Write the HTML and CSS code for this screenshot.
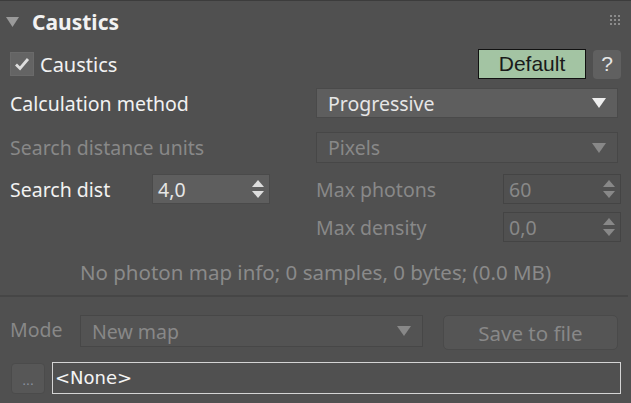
FILE: index.html
```html
<!DOCTYPE html>
<html lang="en">
<head>
    <meta charset="UTF-8">
    <title>Caustics</title>
    <link rel="stylesheet" href="styles.css">
</head>
<body>
    <div class="panel">
        <div class="header">
            <svg class="caret" width="14" height="11" viewBox="0 0 14 11"><polygon points="0,0 13,0 6.5,10" fill="#9a9a9a"/></svg>
            <span class="title">Caustics</span>
            <svg class="grip" width="11" height="11" viewBox="0 0 11 11" fill="#8c8c8c">
                <rect x="0" y="0" width="2" height="2"/><rect x="4" y="0" width="2" height="2"/><rect x="8" y="0" width="2" height="2"/>
                <rect x="0" y="4" width="2" height="2"/><rect x="4" y="4" width="2" height="2"/><rect x="8" y="4" width="2" height="2"/>
                <rect x="0" y="8" width="2" height="2"/><rect x="4" y="8" width="2" height="2"/><rect x="8" y="8" width="2" height="2"/>
            </svg>
        </div>

        <div class="row row-check">
            <label class="check">
                <span class="box"><svg width="16" height="14" viewBox="0 0 16 14"><path d="M2 7.5 L6 11.5 L14 2" fill="none" stroke="#dedede" stroke-width="2.8"/></svg></span>
                Caustics
            </label>
            <button class="btn-default">Default</button>
            <button class="btn-help">?</button>
        </div>

        <div class="row row-calc">
            <span class="label">Calculation method</span>
            <div class="select">
                <span>Progressive</span>
                <svg class="arrow" width="14" height="10" viewBox="0 0 14 10"><polygon points="0,0 14,0 7,10" fill="#eeeeee"/></svg>
            </div>
        </div>

        <div class="row row-units">
            <span class="label dim">Search distance units</span>
            <div class="select off">
                <span>Pixels</span>
                <svg class="arrow" width="14" height="10" viewBox="0 0 14 10"><polygon points="0,0 14,0 7,10" fill="#888888"/></svg>
            </div>
        </div>

        <div class="row row-search">
            <span class="label label-dist">Search dist</span>
            <div class="spin">
                <span>4,0</span>
                <svg class="updown" width="12" height="18" viewBox="0 0 12 18" fill="#dddddd"><polygon points="6,0 12,7 0,7"/><polygon points="0,11 12,11 6,18"/></svg>
            </div>
            <span class="label dim label-max">Max photons</span>
            <div class="spin off">
                <span>60</span>
                <svg class="updown" width="12" height="18" viewBox="0 0 12 18" fill="#888888"><polygon points="6,0 12,7 0,7"/><polygon points="0,11 12,11 6,18"/></svg>
            </div>
        </div>

        <div class="row row-density">
            <span class="label dim label-max">Max density</span>
            <div class="spin off">
                <span>0,0</span>
                <svg class="updown" width="12" height="18" viewBox="0 0 12 18" fill="#888888"><polygon points="6,0 12,7 0,7"/><polygon points="0,11 12,11 6,18"/></svg>
            </div>
        </div>

        <div class="info">No photon map info; 0 samples, 0 bytes; (0.0 MB)</div>

        <div class="separator"></div>

        <div class="row row-mode">
            <span class="label dim label-mode">Mode</span>
            <div class="select off mode-select">
                <span>New map</span>
                <svg class="arrow" width="14" height="10" viewBox="0 0 14 10"><polygon points="0,0 14,0 7,10" fill="#888888"/></svg>
            </div>
            <button class="btn-save">Save to file</button>
        </div>

        <div class="row row-file">
            <button class="btn-dots">...</button>
            <div class="file-field">&lt;None&gt;</div>
        </div>
    </div>
</body>
</html>
```

FILE: styles.css
```css
body {
    margin: 0;
    background: #505050;
    font-family: 'Noto Sans', 'Open Sans', sans-serif;
    color: #f2f2f2;
}
.panel {
    width: 631px;
    height: 403px;
    box-sizing: border-box;
    border-top: 1px solid #3c3c3c;
    background: #505050;
    overflow: hidden;
}
.header {
    display: flex;
    align-items: center;
    height: 41px;
    padding: 0 10px 0 6px;
}
.caret {
    margin-right: 12px;
    margin-top: 1px;
}
.title {
    font-weight: bold;
    font-size: 21px;
    flex: 1;
}
.grip {
    margin-top: -2px;
}
.row {
    display: flex;
    align-items: center;
    padding: 0 10px;
}
.label {
    font-size: 19.5px;
    flex: 1;
}
.dim {
    color: #888;
}

/* checkbox row */
.row-check {
    margin-top: 7px;
    height: 30px;
}
.check {
    display: flex;
    align-items: center;
    font-size: 20px;
    flex: 1;
}
.box {
    width: 22px;
    height: 22px;
    background: #646464;
    border: 1px solid #6a6a6a;
    display: flex;
    align-items: center;
    justify-content: center;
    margin-right: 6px;
}
.btn-default {
    width: 108px;
    height: 30px;
    background: #a3c4a3;
    border: 1px solid #111;
    font-family: 'Liberation Sans', Arial, sans-serif;
    font-size: 21px;
    color: #1a1a1a;
    padding: 0;
    margin-right: 7px;
}
.btn-help {
    width: 28px;
    height: 29px;
    background: #606060;
    border: none;
    border-radius: 4px;
    color: #e6e6e6;
    font-family: 'Liberation Sans', Arial, sans-serif;
    font-size: 21px;
    padding: 0;
}

/* dropdowns */
.select {
    width: 302px;
    height: 30px;
    box-sizing: border-box;
    margin-right: 3px;
    background: #5e5e5e;
    border: 1px solid #4a4a4a;
    display: flex;
    align-items: center;
    padding: 0 11px 0 11px;
    font-size: 19.5px;
    color: #e6e6e6;
}
.select span {
    flex: 1;
}
.select.off {
    background: #535353;
    border-color: #474747;
    color: #888;
}
.row-calc {
    margin-top: 9px;
    height: 30px;
}
.row-units {
    margin-top: 14px;
    height: 31px;
}
.row-units .select {
    height: 31px;
}

/* spinners */
.spin {
    width: 118px;
    height: 30px;
    box-sizing: border-box;
    background: #5e5e5e;
    border: 1px solid #4a4a4a;
    display: flex;
    align-items: center;
    padding: 0 5px 0 5px;
    font-size: 19.5px;
    color: #e6e6e6;
}
.spin span {
    flex: 1;
}
.spin.off {
    background: #505050;
    border-color: #444;
    color: #888;
}
.label-dist {
    flex: 0 0 142px;
}
.label-max {
    flex: 0 0 187px;
    margin-left: 46px;
}
.row-search {
    margin-top: 11px;
    height: 30px;
}
.row-density {
    margin-top: 8px;
    height: 30px;
    padding-left: 270px;
}
.info {
    margin-top: 16px;
    height: 24px;
    text-align: center;
    font-size: 20.5px;
    color: #8a8a8a;
}
.separator {
    margin: 13px 3px 0 0;
    height: 2px;
    background: #464646;
}

/* bottom section */
.row-mode {
    margin-top: 18px;
    height: 36px;
    align-items: flex-start;
}
.label-mode {
    flex: 0 0 70px;
    margin-top: 1px;
}
.mode-select {
    width: 343px;
    height: 32px;
    margin-right: 20px;
}
.btn-save {
    width: 175px;
    height: 35px;
    box-sizing: border-box;
    background: #555;
    border: 1px solid #4a4a4a;
    border-radius: 5px;
    font-family: 'Noto Sans', sans-serif;
    font-size: 20.5px;
    color: #888;
    padding: 0;
}
.row-file {
    margin-top: 11px;
    height: 32px;
    padding-left: 11px;
}
.btn-dots {
    width: 34px;
    height: 31px;
    background: #575757;
    border: 1px solid #4b4b4b;
    border-radius: 4px;
    color: #8a93a0;
    font-size: 14px;
    padding: 4px 0 0 0;
    margin-right: 7px;
}
.file-field {
    flex: 1;
    height: 32px;
    box-sizing: border-box;
    border: 1px solid #d4d4d4;
    padding-left: 2px;
    font-family: 'DejaVu Sans', sans-serif;
    font-size: 18px;
    line-height: 30px;
    color: #f4f4f4;
}
```
